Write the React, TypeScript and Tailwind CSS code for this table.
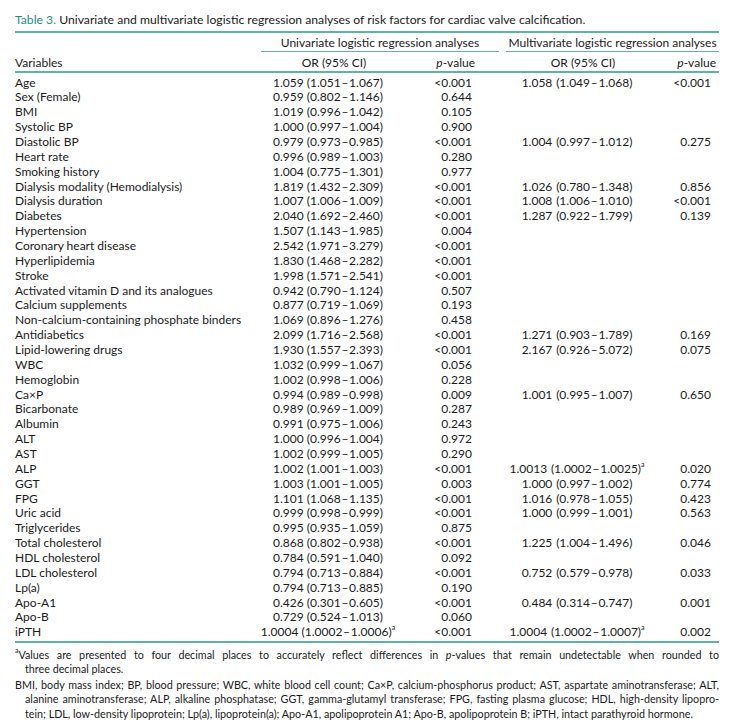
const D = "\u200a\u2013\u200a";

type RowData = [string, string, string, string?, string?, boolean?, boolean?];

const rows: RowData[] = [
  ["Age", "1.059 (1.051" + D + "1.067)", "<0.001", "1.058 (1.049" + D + "1.068)", "<0.001"],
  ["Sex (Female)", "0.959 (0.802" + D + "1.146)", "0.644"],
  ["BMI", "1.019 (0.996" + D + "1.042)", "0.105"],
  ["Systolic BP", "1.000 (0.997" + D + "1.004)", "0.900"],
  ["Diastolic BP", "0.979 (0.973" + D + "0.985)", "<0.001", "1.004 (0.997" + D + "1.012)", "0.275"],
  ["Heart rate", "0.996 (0.989" + D + "1.003)", "0.280"],
  ["Smoking history", "1.004 (0.775" + D + "1.301)", "0.977"],
  ["Dialysis modality (Hemodialysis)", "1.819 (1.432" + D + "2.309)", "<0.001", "1.026 (0.780" + D + "1.348)", "0.856"],
  ["Dialysis duration", "1.007 (1.006" + D + "1.009)", "<0.001", "1.008 (1.006" + D + "1.010)", "<0.001"],
  ["Diabetes", "2.040 (1.692" + D + "2.460)", "<0.001", "1.287 (0.922" + D + "1.799)", "0.139"],
  ["Hypertension", "1.507 (1.143" + D + "1.985)", "0.004"],
  ["Coronary heart disease", "2.542 (1.971" + D + "3.279)", "<0.001"],
  ["Hyperlipidemia", "1.830 (1.468" + D + "2.282)", "<0.001"],
  ["Stroke", "1.998 (1.571" + D + "2.541)", "<0.001"],
  ["Activated vitamin D and its analogues", "0.942 (0.790" + D + "1.124)", "0.507"],
  ["Calcium supplements", "0.877 (0.719" + D + "1.069)", "0.193"],
  ["Non-calcium-containing phosphate binders", "1.069 (0.896" + D + "1.276)", "0.458"],
  ["Antidiabetics", "2.099 (1.716" + D + "2.568)", "<0.001", "1.271 (0.903" + D + "1.789)", "0.169"],
  ["Lipid-lowering drugs", "1.930 (1.557" + D + "2.393)", "<0.001", "2.167 (0.926" + D + "5.072)", "0.075"],
  ["WBC", "1.032 (0.999" + D + "1.067)", "0.056"],
  ["Hemoglobin", "1.002 (0.998" + D + "1.006)", "0.228"],
  ["Ca\u00d7P", "0.994 (0.989" + D + "0.998)", "0.009", "1.001 (0.995" + D + "1.007)", "0.650"],
  ["Bicarbonate", "0.989 (0.969" + D + "1.009)", "0.287"],
  ["Albumin", "0.991 (0.975" + D + "1.006)", "0.243"],
  ["ALT", "1.000 (0.996" + D + "1.004)", "0.972"],
  ["AST", "1.002 (0.999" + D + "1.005)", "0.290"],
  ["ALP", "1.002 (1.001" + D + "1.003)", "<0.001", "1.0013 (1.0002" + D + "1.0025)", "0.020", false, true],
  ["GGT", "1.003 (1.001" + D + "1.005)", "0.003", "1.000 (0.997" + D + "1.002)", "0.774"],
  ["FPG", "1.101 (1.068" + D + "1.135)", "<0.001", "1.016 (0.978" + D + "1.055)", "0.423"],
  ["Uric acid", "0.999 (0.998" + D + "0.999)", "<0.001", "1.000 (0.999" + D + "1.001)", "0.563"],
  ["Triglycerides", "0.995 (0.935" + D + "1.059)", "0.875"],
  ["Total cholesterol", "0.868 (0.802" + D + "0.938)", "<0.001", "1.225 (1.004" + D + "1.496)", "0.046"],
  ["HDL cholesterol", "0.784 (0.591" + D + "1.040)", "0.092"],
  ["LDL cholesterol", "0.794 (0.713" + D + "0.884)", "<0.001", "0.752 (0.579" + D + "0.978)", "0.033"],
  ["Lp(a)", "0.794 (0.713" + D + "0.885)", "0.190"],
  ["Apo-A1", "0.426 (0.301" + D + "0.605)", "<0.001", "0.484 (0.314" + D + "0.747)", "0.001"],
  ["Apo-B", "0.729 (0.524" + D + "1.013)", "0.060"],
  ["iPTH", "1.0004 (1.0002" + D + "1.0006)", "<0.001", "1.0004 (1.0002" + D + "1.0007)", "0.002", true, true],
];

function Sup() {
  return <sup className="relative -top-[1px] align-super text-[7px] leading-none">a</sup>;
}

function Row({ r }: { r: RowData }) {
  const [name, uor, up, mor, mp, usup, msup] = r;
  return (
    <div className="flex h-[14.86px] items-center leading-[14.86px] whitespace-nowrap">
      <div className="w-[243px]">{name}</div>
      <div className="w-[140px] text-center">
        {uor}
        {usup && <Sup />}
      </div>
      <div className="w-[77px] pr-[3px] text-right">{up}</div>
      <div className="w-[31px]" />
      <div className="w-[142px] text-center">
        {mor ? mor.replace(" (", " \u200a(") : ""}
        {msup && <Sup />}
      </div>
      <div className="w-[68px] pr-[5px] text-right">{mp}</div>
    </div>
  );
}

export default function App() {
  return (
    <main className="h-[724px] w-[748px] overflow-hidden bg-white px-[15px] font-['Lato',sans-serif] text-[12px] text-[#1a1a1a]">
      <div className="w-[704px]">
        <div className="h-[31px] pt-[12px] text-[12.2px] leading-[15px] whitespace-nowrap">
          <span className="text-[#1f8b8b]">Table 3.</span> Univariate and multivariate logistic regression
          analyses of risk factors for cardiac valve calcification.
        </div>
        <div className="h-[1.5px] bg-[#5fb2a6]" />

        <div className="flex h-[19.5px] leading-[15px] whitespace-nowrap">
          <div className="w-[246px]" />
          <div className="w-[238px] border-b-[1.5px] border-[#5fb2a6] pt-[2px] text-center">
            Univariate logistic regression analyses
          </div>
          <div className="w-[7px]" />
          <div className="w-[213px] border-b-[1.5px] border-[#5fb2a6] pt-[2px] text-center">
            Multivariate logistic regression analyses
          </div>
        </div>

        <div className="flex h-[19px] pt-[2.5px] leading-[15px] whitespace-nowrap">
          <div className="w-[243px]">Variables</div>
          <div className="w-[140px] pl-[12px] text-center">OR (95% CI)</div>
          <div className="w-[77px] text-right">
            <i>p</i>-value
          </div>
          <div className="w-[31px]" />
          <div className="w-[142px] pl-[12px] text-center">OR (95% CI)</div>
          <div className="w-[68px] text-right">
            <i>p</i>-value
          </div>
        </div>
        <div className="h-[1.5px] bg-[#5fb2a6]" />

        <div className="pt-[3px] pb-[1px]">
          {rows.map((r) => (
            <Row key={r[0]} r={r} />
          ))}
        </div>
        <div className="h-[1.5px] bg-[#5fb2a6]" />

        <div className="pt-[5px] text-[10.75px] leading-[14.5px]">
          <div className="text-justify [text-align-last:justify]">
            <Sup />
            Values are presented to four decimal places to accurately reflect differences in <i>p</i>-values
            that remain undetectable when rounded to
          </div>
          <div className="pl-[10px]">three decimal places.</div>
          <div className="mt-[1px] text-justify [text-align-last:justify]">
            BMI, body mass index; BP, blood pressure; WBC, white blood cell count; Ca{"\u00d7"}P, calcium-phosphorus
            product; AST, aspartate aminotransferase; ALT,
          </div>
          <div className="pl-[10px] text-justify [text-align-last:justify]">
            alanine aminotransferase; ALP, alkaline phosphatase; GGT, gamma-glutamyl transferase; FPG, fasting
            plasma glucose; HDL, high-density lipopro-
          </div>
          <div className="pl-[10px] whitespace-nowrap">
            tein; LDL, low-density lipoprotein; Lp(a), lipoprotein(a); Apo-A1, apolipoprotein A1; Apo-B,
            apolipoprotein B; iPTH, intact parathyroid hormone.
          </div>
        </div>
      </div>
    </main>
  );
}
